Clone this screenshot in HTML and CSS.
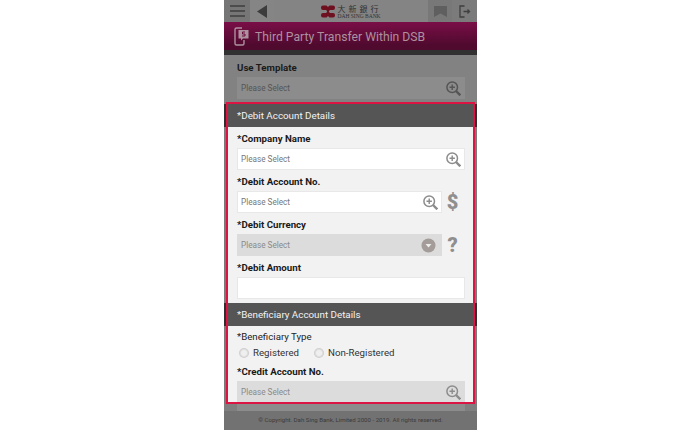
FILE: index.html
```html
<!DOCTYPE html>
<html>
<head>
<meta name="viewport" content="width=device-width, initial-scale=1.0">
<title>Third Party Transfer Within DSB</title>
<link rel="stylesheet" href="styles.css">
</head>

<body>

<div class="phone">

  <div class="top-bar">
    <div class="top-btn menu-btn">
      <svg width="15" height="12" viewBox="0 0 15 12"><path d="M0 1h15M0 6h15M0 11h15" stroke="#3f3f3f" stroke-width="1.600" fill="none"/></svg>
    </div>
    <div class="top-btn back-btn">
      <svg width="10" height="13" viewBox="0 0 10 13"><path d="M10 0v13L0 6.500z" fill="#3c3c3c"/></svg>
    </div>
    <div class="logo">
      <svg width="14" height="13" viewBox="0 0 14 13"><path d="M2 .5h3.500L7 2 8.500.5H12a2 2 0 0 1 2 2V3a2 2 0 0 1-2 2H9L8 6v1l1 1h3a2 2 0 0 1 2 2v.5a2 2 0 0 1-2 2H8.500L7 11l-1.500 1.500H2a2 2 0 0 1-2-2V10a2 2 0 0 1 2-2h3l1-1V6L5 5H2a2 2 0 0 1-2-2v-.5a2 2 0 0 1 2-2z" fill="#6e1020"/></svg>
      <div class="logo-text">
        <span class="logo-zh">大新銀行</span>
        <span class="logo-en">DAH SING BANK</span>
      </div>
    </div>
    <div class="top-btn mark-btn">
      <svg width="13" height="11" viewBox="0 0 13 11"><path d="M0 0h13v11L6.500 7.500 0 11z" fill="#5f5f5f"/></svg>
    </div>
    <div class="top-btn exit-btn">
      <svg width="12" height="13" viewBox="0 0 12 13"><path d="M5.500 1H1v11h4.500M4.500 6.500h6M8.500 4.500l2 2-2 2" stroke="#3f3f3f" stroke-width="1.300" fill="none"/></svg>
    </div>
  </div>

  <div class="title-bar">
    <svg width="15" height="19" viewBox="0 0 15 19"><path d="M8 1H2.500A1.500 1.500 0 0 0 1 2.500v14A1.500 1.500 0 0 0 2.500 18h6a1.500 1.500 0 0 0 1.500-1.500V13" stroke="#ad919e" stroke-width="1.400" fill="none"/><path d="M4.500 3h10v8.500H9L7 13.500v-2H4.500z" fill="#ad919e"/><path d="M11 5H8.500v2H11v2H8" stroke="#6a0a3a" stroke-width="1" fill="none"/></svg>
    <span>Third Party Transfer Within DSB</span>
  </div>

  <div class="template">
    <div class="label">Use Template</div>
    <div class="field">
      <span>Please Select</span>
      <svg class="zoom-icon" width="15" height="15" viewBox="0 0 15 15"><use href="#zoomglass"/></svg>
    </div>
  </div>

  <div class="details-wrap">
  <div class="details">
    <div class="band">*Debit Account Details</div>
    <div class="group">
      <div class="label">*Company Name</div>
      <div class="field white">
        <span>Please Select</span>
        <svg class="zoom-icon" width="15" height="15" viewBox="0 0 15 15"><use href="#zoomglass"/></svg>
      </div>

      <div class="label">*Debit Account No.</div>
      <div class="row">
        <div class="field white">
          <span>Please Select</span>
          <svg class="zoom-icon" width="15" height="15" viewBox="0 0 15 15"><use href="#zoomglass"/></svg>
        </div>
        <div class="side-mark">$</div>
      </div>

      <div class="label">*Debit Currency</div>
      <div class="row">
        <div class="field grey drop">
          <span>Please Select</span>
          <svg width="15" height="15" viewBox="0 0 15 15"><circle cx="7.500" cy="7.500" r="7" fill="#a39c99"/><path d="M4.500 6h6l-3 3.500z" fill="#eee"/></svg>
        </div>
        <div class="side-mark">?</div>
      </div>

      <div class="label">*Debit Amount</div>
      <div class="field white"></div>
    </div>

    <div class="band">*Beneficiary Account Details</div>
    <div class="group second">
      <div class="plain-label">*Beneficiary Type</div>
      <div class="radios">
        <span class="radio"></span><span class="radio-text">Registered</span>
        <span class="radio"></span><span class="radio-text">Non-Registered</span>
      </div>
      <div class="label">*Credit Account No.</div>
      <div class="field grey">
        <span>Please Select</span>
        <svg class="zoom-icon" width="15" height="15" viewBox="0 0 15 15"><use href="#zoomglass"/></svg>
      </div>
    </div>
  </div>
  </div>

  <div class="peek"></div>
  <div class="footer">© Copyright. Dah Sing Bank, Limited 2000 - 2019. All rights reserved.</div>

</div>

<!-- magnifier used by all the lookup fields -->
<svg class="icon-defs" width="0" height="0">
  <symbol id="zoomglass" viewBox="0 0 15 15">
    <circle cx="6.200" cy="6.200" r="5.300" stroke="currentColor" stroke-width="1.500" fill="none"/>
    <path d="M6.200 3.500v5.400M3.500 6.200h5.400" stroke="currentColor" stroke-width="1.400"/>
    <path d="M10 10l4.300 4.300" stroke="currentColor" stroke-width="2.400"/>
  </symbol>
</svg>

</body>
</html>
```

FILE: styles.css
```css
* {box-sizing: border-box;}

body {
  margin: 0;
  background-color: #fff;
  font-family: Roboto, "Liberation Sans", sans-serif;
}

.phone {
  width: 253px;
  height: 430px;
  margin-left: 224px;
  overflow: hidden;
  display: flex;
  flex-direction: column;
  background-color: #7f7f7f;
}

.icon-defs {
  position: absolute;
}

/* top bar */
.top-bar {
  height: 22px;
  flex: none;
  display: flex;
  background-color: #828282;
}

.top-btn {
  display: flex;
  align-items: center;
  justify-content: center;
}

.menu-btn {width: 26px; background-color: #767676;}
.back-btn {width: 24px; background-color: #858585;}
.mark-btn {width: 24px; background-color: #787878;}
.exit-btn {width: 25px; background-color: #7b7b7b;}

.logo {
  flex: 1;
  display: flex;
  align-items: center;
  justify-content: center;
  gap: 3px;
  background-color: #848484;
}

.logo-text {
  display: flex;
  flex-direction: column;
  color: #333;
}

.logo-zh {
  font-family: "Noto Sans CJK TC", sans-serif;
  font-size: 8px;
  line-height: 9px;
  letter-spacing: 3px;
  white-space: nowrap;
}

.logo-en {
  font-family: "Liberation Serif", serif;
  font-size: 5.500px;
  line-height: 6px;
  white-space: nowrap;
}

/* title */
.title-bar {
  height: 33px;
  flex: none;
  padding: 5px 0 0 10px;
  display: flex;
  align-items: flex-start;
  gap: 6px;
  background: linear-gradient(#7a0e47, #4f0a2e 84%);
  border-bottom: 5px solid #313131;
  color: #ad919e;
  font-size: 12.200px;
  line-height: 20px;
}

/* use template */
.template {
  height: 47px;
  flex: none;
  padding: 6px 12px 0 13px;
  background-color: #828282;
}

.template .label {
  margin-bottom: 3px;
}

.template .zoom-icon {
  color: #555;
}

.label {
  color: #1a1a1a;
  font-size: 9.700px;
  font-weight: 700;
  line-height: 13px;
  margin-bottom: 2px;
}

.field {
  height: 22px;
  flex: 1;
  padding: 0 4px;
  display: flex;
  align-items: center;
  justify-content: space-between;
  background-color: #8c8c8c;
  color: #555;
  font-size: 8.200px;
}

.field.white {
  background-color: #fff;
  border: 1px solid #e8e8e8;
  padding: 0 3px;
  color: #777;
}

.field.grey {
  background-color: #dcdcdc;
  color: #8a8a8a;
}

.field.drop {
  padding-right: 6px;
}

.zoom-icon {
  flex: none;
  color: #8c8c8c;
}

/* highlighted part */
.details-wrap {
  flex: none;
  padding: 0 2px;
  background: linear-gradient(#7a7a7a 2px, #2f2f2f 2px 25px, #7a7a7a 25px 201px, #2f2f2f 201px 224px, #7a7a7a 224px);
}

.details {
  height: 302px;
  border: 2px solid #dc1444;
  background-color: #f2f2f2;
  overflow: hidden;
}

.band {
  height: 23px;
  padding-left: 9px;
  display: flex;
  align-items: center;
  background-color: #555;
  color: #f2f2f2;
  font-size: 9.800px;
}

.group {
  padding: 5px 8px 4px 9px;
}

.group .label {
  margin-bottom: 3px;
}

.group.second {
  padding-top: 4px;
}

.group .field + .label,
.group .row + .label {
  margin-top: 5px;
}

.radios + .label {
  margin-top: 6px;
}

.row {
  display: flex;
  align-items: center;
}

.side-mark {
  width: 23px;
  flex: none;
  padding-right: 2px;
  text-align: center;
  color: #8f8f8f;
  font-size: 20px;
  font-weight: 900;
  line-height: 22px;
}

.plain-label {
  color: #222;
  font-size: 9.700px;
  line-height: 13px;
}

.radios {
  margin-top: 3px;
  display: flex;
  align-items: center;
  color: #333;
  font-size: 9.700px;
  line-height: 13px;
}

.radio {
  width: 10px;
  height: 10px;
  margin: 0 4px 0 2px;
  border-radius: 50%;
  background: radial-gradient(#efefef 35%, #cfcfcf 65%, #dcdcdc);
}

.radio-text {
  margin-right: 13px;
}

/* bottom */
.peek {
  height: 7px;
  flex: none;
  margin: 0 12px 0 13px;
  background-color: #8c8c8c;
}

.footer {
  flex: 1;
  background-color: #727272;
  color: #3a3a3a;
  font-size: 6.100px;
  line-height: 18px;
  text-align: center;
}
```
